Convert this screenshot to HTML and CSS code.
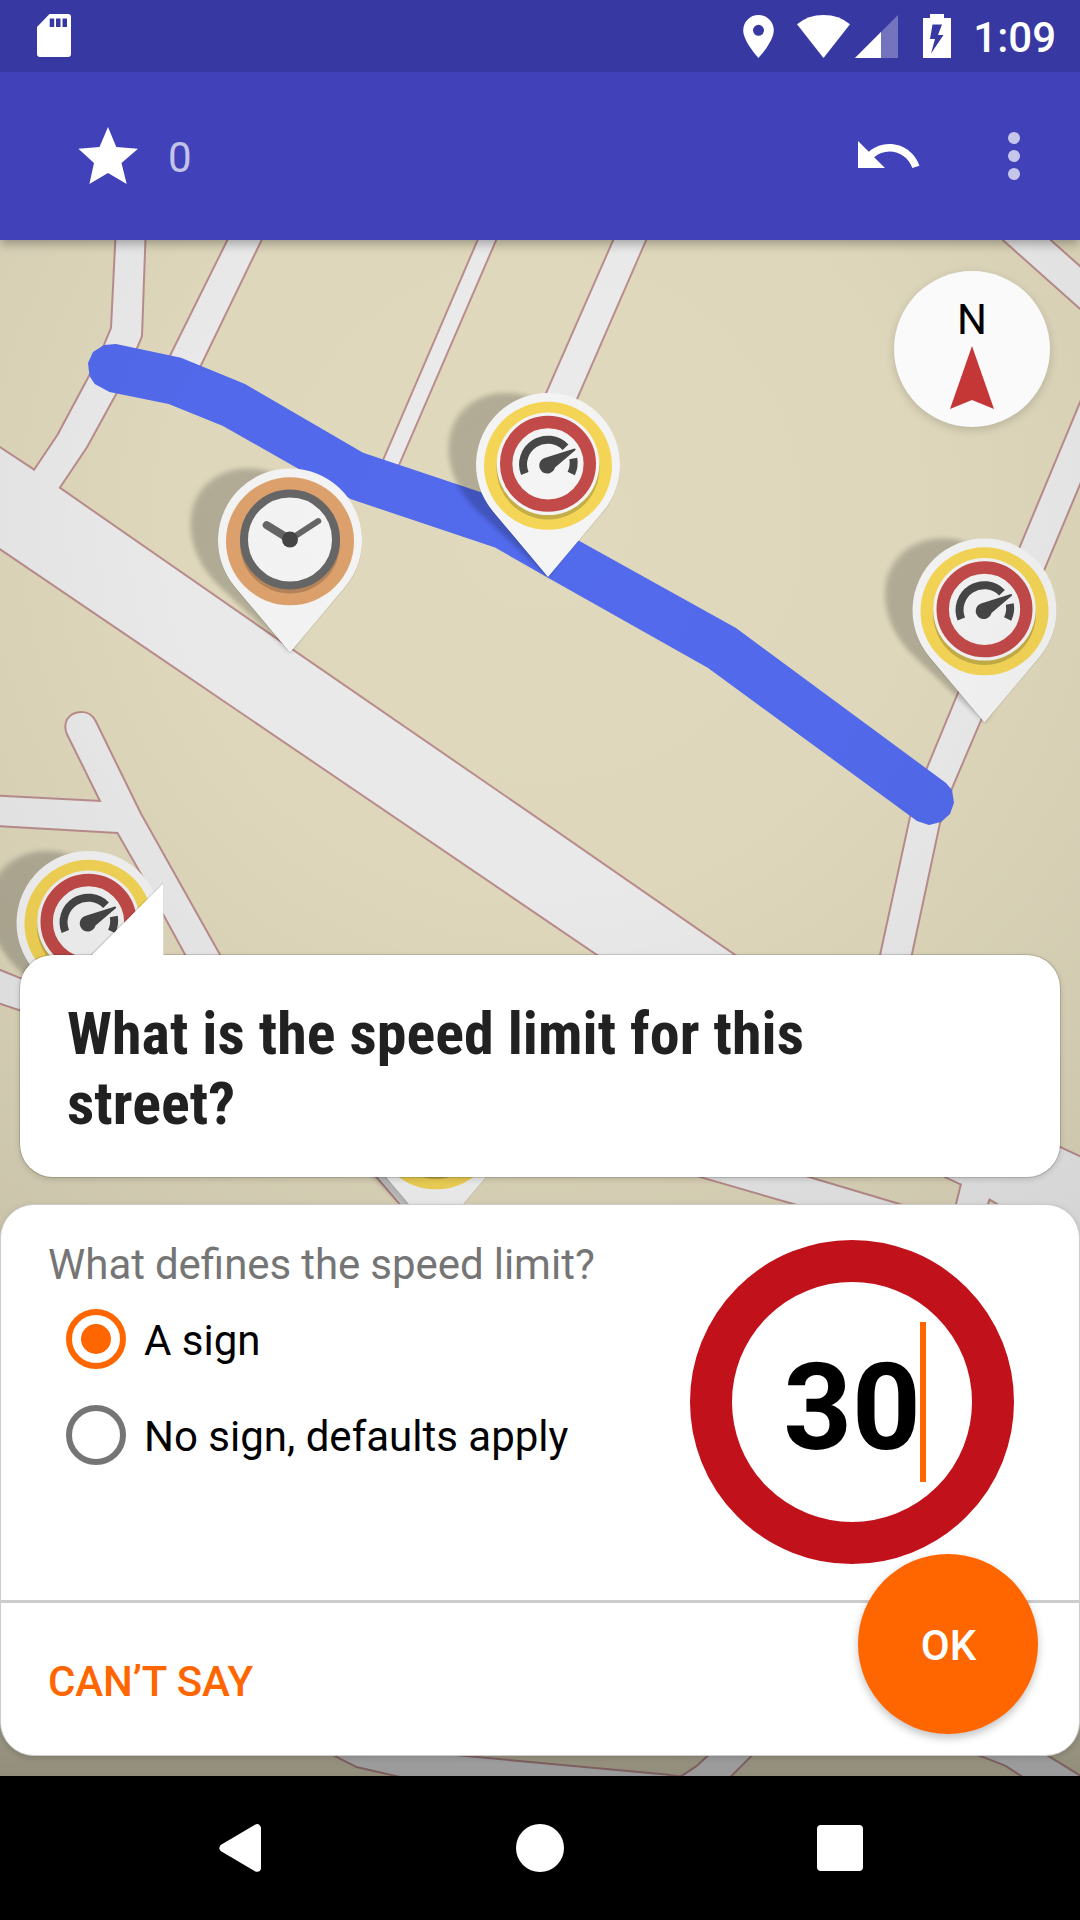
FILE: index.html
```html
<!DOCTYPE html>
<html lang="en">
<head>
<meta charset="utf-8">
<title>Speed limit quest</title>
<link rel="stylesheet" href="styles.css">
</head>
<body>
<div class="screen">
  <header class="status-bar">
    <svg class="icon-sd" width="34" height="44" viewBox="0 0 34 44"><path fill="#fff" fill-rule="evenodd" d="M12.500 0H31a3 3 0 0 1 3 3V40a3 3 0 0 1-3 3H3a3 3 0 0 1-3-3V13zM12.700 4.500v8.500h4.500V4.500zM19 4.500v8.500h4.500V4.500zM25.500 4.500v8.500h4.500V4.500z"/></svg>
    <div class="status-right">
      <svg width="31" height="43" viewBox="0 0 31 43"><path fill="#fff" fill-rule="evenodd" d="M15.500 0A15.300 15.300 0 0 0 .2 15.300C.2 26.500 15.500 43 15.500 43S30.800 26.500 30.800 15.300A15.300 15.300 0 0 0 15.500 0zM15.500 9.800a5.500 5.500 0 1 1 0 11 5.500 5.500 0 0 1 0-11z"/></svg>
      <svg class="icon-wifi" width="53" height="43" viewBox="0 0 53 43"><path fill="#fff" d="M0 9.300Q11 0 26.500 0T53 9.300L26.500 43z"/></svg>
      <svg class="icon-signal" width="43" height="43" viewBox="0 0 43 43"><path fill="#fff" opacity=".3" d="M43 0V43H0z"/><path fill="#fff" d="M26 17V43H0z"/></svg>
      <svg class="icon-battery" width="28" height="44" viewBox="0 0 28 44"><path fill="#fff" fill-rule="evenodd" d="M7 0H21V4H28V44H0V4H7zM9.500 10.500L7 25H12L8 39.500L20.500 21H15L19 10.500z"/></svg>
      <span class="clock">1:09</span>
    </div>
  </header>
  <div class="toolbar">
    <svg class="star" width="60" height="58" viewBox="0 0 60 58"><path fill="#fff" d="M30 0L38.300 20L60 21.700L43.500 36L48.700 57L30 46L11.400 57L16 36L.4 21.700L21.500 20z"/></svg>
    <span class="score">0</span>
    <svg class="undo" width="72" height="72" viewBox="0 0 24 24"><path fill="#fff" d="M12.500 8c-2.650 0-5.050.99-6.900 2.600L2 7v9h9l-3.620-3.620c1.390-1.160 3.160-1.880 5.120-1.880 3.540 0 6.550 2.310 7.600 5.500l2.370-.78C21.080 11.030 17.150 8 12.500 8z"/></svg>
    <svg class="more" width="12" height="48" viewBox="0 0 12 48"><g fill="#fff" opacity=".7"><circle cx="6" cy="6" r="6"/><circle cx="6" cy="24" r="6"/><circle cx="6" cy="42" r="6"/></g></svg>
  </div>
  <main class="content">
    <svg class="map" width="1080" height="1536" viewBox="0 240 1080 1536">
      <defs>
        <radialGradient id="light" gradientUnits="userSpaceOnUse" cx="540" cy="520" r="1250">
          <stop offset="0" stop-color="#000" stop-opacity="0"/>
          <stop offset=".3" stop-color="#000" stop-opacity=".01"/>
          <stop offset=".5" stop-color="#000" stop-opacity=".045"/>
          <stop offset="1" stop-color="#000" stop-opacity=".16"/>
        </radialGradient>
        <linearGradient id="foot" x1="0" y1="0" x2="0" y2="1">
          <stop offset="0" stop-opacity="0"/><stop offset=".5" stop-opacity=".19"/><stop offset="1" stop-opacity=".22"/>
        </linearGradient>
        <filter id="soft" x="-20%" y="-20%" width="140%" height="140%"><feGaussianBlur stdDeviation="2.500"/></filter>
        <path id="drop" d="M0 0L-55.200-65.800A72 72 0 1 1 55.200-65.800z"/>
        <g id="pin-base">
          <use href="#drop" transform="matrix(1 0 .228 1 0 0)" opacity=".2" filter="url(#soft)"/>
          <use href="#drop" y="1" opacity=".12"/>
          <use href="#drop" fill="#f4f4f4"/>
        </g>
        <g id="speed-pin">
          <use href="#pin-base"/>
          <circle cy="-111.200" r="64" fill="#f4d556"/>
          <circle cy="-109" r="51.500" fill="#c4ae47"/>
          <circle cy="-113.200" r="51.300" fill="#f4f4f4"/>
          <circle cy="-113.200" r="41.800" fill="none" stroke="#c24a49" stroke-width="12.400"/>
          <path fill="none" stroke="#464646" stroke-width="8" d="M-23.200-103.500A24.700 24.700 0 0 1 17.500-129.800M25.300-118.500A25 25 0 0 1 23.200-103.500"/>
          <path fill="#464646" d="M26.500-128.500Q28.500-128 27-126.500L7-109.500A8 8 0 1 1-3.500-119z"/>
        </g>
        <g id="clock-pin">
          <use href="#pin-base"/>
          <circle cy="-111.200" r="64" fill="#dda16d"/>
          <circle cy="-109" r="50" fill="#b4835a"/>
          <circle cy="-113" r="46" fill="#f4f4f4" stroke="#666" stroke-width="8"/>
          <path stroke="#666" stroke-width="8" stroke-linecap="round" d="M0-113L-23.300-127.400"/>
          <path stroke="#666" stroke-width="6" stroke-linecap="round" d="M0-113L28.300-131.400"/>
          <circle cy="-113" r="8" fill="#444"/>
        </g>
        <g id="roads">
          <path d="M116.400 238L112 328L105 345L89 378L58.500 435L34.400 471L-5 445V545L0 548L165 660L540 915L640 983L774 983L732 954L540 821L293 651L58.500 488L86 447L115 394L136 348L141 336L144.500 238z"/>
          <path d="M229.500 238L171 356L150 390L185 395L200 365L261.500 238z"/>
          <path d="M479.600 238L384.600 459L380 470L392 480L398 465L496 238z"/>
          <path d="M615.200 238L487 530L519 530L646 238z"/>
          <path d="M1002 238L1085 312V272L1047 238z"/>
          <path d="M1085 393L1020.800 547L959 693L928 768L911 817L875 983H905L911 954L939 823L951.500 787L980.500 719L1044 568L1085 470z"/>
          <path d="M70 738L101.600 802L-5 796.500V825L118 832L141 872L163.600 913L200 980H232L218.500 954L140 814L95 722C91 714 86 713 81.600 713C70 713 61 723 70 738z"/>
          <path d="M-5 969L20 979L60 990V1020L19 1009L-5 1001z"/>
          <path d="M378 1177.500L340 1140L430 1140L450 1240H432z"/>
          <path d="M706 1177.700L602 1147L703 1147L808 1177.700L896 1204L930 1214L830 1214L797 1204z"/>
          <path d="M947 1177L962 1184L950 1232H977L989 1198L1090 1260V1162L1060 1148L1000 1120z"/>
          <path d="M330 1752L337 1756L356.700 1766L398 1775.500L430 1783H720L666 1775.500L455 1756L400 1750z"/>
          <path d="M713 1752L709 1756L697 1767L684 1775.500L672 1783H724L730 1776L754 1752z"/>
          <path d="M972 1752L983 1756L1006 1765L1023 1776L1033 1783H1088L1079 1776L1040 1752z"/>
        </g>
      </defs>
      <rect y="240" width="1080" height="1536" fill="#e0d9bd"/>
      <use href="#roads" fill="none" stroke="#bb8e8e" stroke-width="4"/>
      <use href="#roads" fill="#ebebeb"/>
      <path fill="#526aec" d="M104 345L116 344L181 357.700L245 384L363 452.700L508.600 501.600L579 540.700L736 628L946 783L952 790L954 802.700L950 814L941 822L929 825L917 821L707.700 667.700L548 577.700L495 547.500L350.500 499L297 468L223 426L168.700 404L109.500 392L94.700 384L89.500 376L88 363L93 352z"/>
      <use href="#clock-pin" x="290" y="652.500"/>
      <use href="#speed-pin" x="548" y="577"/>
      <use href="#speed-pin" x="984.500" y="722.500"/>
      <use href="#speed-pin" x="88.500" y="1035"/>
      <use href="#speed-pin" x="436" y="1236.500"/>
      <rect y="240" width="1080" height="1536" fill="url(#light)"/>
      <rect y="1690" width="1080" height="86" fill="url(#foot)"/>
    </svg>
    <div class="compass">
      <span>N</span>
      <svg width="44" height="63" viewBox="0 0 44 63"><path fill="#c53636" d="M22 0L44 63L22 54L0 63z"/></svg>
    </div>
    <section class="question">
      <svg class="tail" width="73" height="76" viewBox="0 0 73 76"><path fill="none" stroke="#000" stroke-opacity=".15" stroke-width="1.500" d="M0 72L72.500 0V72"/><path fill="#fff" d="M0 73L72.500 0V76H0z"/></svg>
      <h1>What is the speed limit for this street?</h1>
    </section>
    <section class="answer">
      <div class="form">
        <div class="options">
          <h2>What defines the speed limit?</h2>
          <label class="option"><span class="radio checked"></span><span class="label">A sign</span></label>
          <label class="option"><span class="radio"></span><span class="label">No sign, defaults apply</span></label>
        </div>
        <div class="sign"><span class="value">30</span><span class="caret"></span></div>
      </div>
      <div class="actions">
        <button class="skip">CAN’T SAY</button>
        <button class="ok">OK</button>
      </div>
    </section>
  </main>
  <nav class="nav-bar">
    <svg width="42" height="48" viewBox="0 0 42 48"><path fill="#fff" stroke="#fff" stroke-width="8" stroke-linejoin="round" d="M4.500 24L38 4.300V43.700z"/></svg>
    <svg width="48" height="48" viewBox="0 0 48 48"><circle cx="24" cy="24" r="24" fill="#fff"/></svg>
    <svg width="46" height="46" viewBox="0 0 46 46"><rect width="46" height="46" rx="4" fill="#fff"/></svg>
  </nav>
</div>
</body>
</html>
```

FILE: styles.css
```css
* { box-sizing: border-box; }

body {
  margin: 0;
  font-family: Roboto, "Liberation Sans", sans-serif;
}

h1, h2 { margin: 0; }

svg { display: block; flex: none; }

button {
  border: 0;
  padding: 0;
  background: none;
  font: 500 42px/1.17 Roboto, sans-serif;
}

.screen {
  width: 1080px;
  height: 1920px;
  display: flex;
  flex-direction: column;
  overflow: hidden;
}

.status-bar {
  height: 72px;
  background: #3838a2;
  display: flex;
  justify-content: space-between;
  align-items: center;
  padding: 0 24px 0 37px;
}

.status-right {
  display: flex;
  align-items: center;
}

.icon-wifi { margin-left: 23px; }
.icon-signal { margin-left: 5px; }
.icon-battery { margin-left: 25px; }

.clock {
  margin-left: 22px;
  color: #fff;
  font-size: 42px;
  font-weight: 500;
  line-height: 50px;
  padding-top: 3px;
}

.toolbar {
  position: relative;
  z-index: 2;
  height: 168px;
  background: #4141b9;
  display: flex;
  align-items: center;
  padding: 0 60px 0 78px;
  box-shadow: 0 4px 10px rgba(0, 0, 0, .3);
  clip-path: inset(0 0 -20px 0);
}

.score {
  margin-left: 30px;
  color: rgba(255, 255, 255, .7);
  font-size: 42px;
  line-height: 50px;
  padding-top: 4px;
}

.undo { margin-left: auto; }
.more { margin-left: 84px; }

.content {
  position: relative;
  height: 1536px;
  padding-top: 715px;
}

.map {
  position: absolute;
  left: 0;
  top: 0;
}

.compass {
  position: absolute;
  left: 894px;
  top: 31px;
  width: 156px;
  height: 156px;
  border-radius: 50%;
  background: #fafafa;
  box-shadow: 0 3px 10px rgba(0, 0, 0, .16);
  display: flex;
  flex-direction: column;
  align-items: center;
  padding-top: 24px;
  font-size: 42px;
  line-height: 50px;
}

.compass svg { margin-top: 1px; }

.question {
  position: relative;
  width: 1040px;
  height: 222px;
  margin: 0 20px 27px;
  padding: 44px 200px 0 47px;
  background: #fff;
  border-radius: 33px;
  box-shadow: 0 0 0 1px rgba(0, 0, 0, .12), 0 2px 6px rgba(0, 0, 0, .16);
}

.tail {
  position: absolute;
  left: 71px;
  top: -72px;
}

.question h1 {
  color: #212121;
  font-family: "Roboto Condensed", Roboto, sans-serif;
  font-size: 60px;
  font-weight: 700;
  font-stretch: 75%;
  line-height: 70.300px;
  letter-spacing: .06px;
}

.answer {
  position: relative;
  height: 552px;
  background: #fff;
  border: 1px solid #ccc;
  border-radius: 34px;
  box-shadow: 0 2px 6px rgba(0, 0, 0, .15);
}

.form {
  height: 398px;
  border-bottom: 3px solid #ccc;
  display: flex;
  justify-content: space-between;
  padding: 35px 65px 0 47px;
}

.options h2 {
  color: #757575;
  font-size: 42px;
  font-weight: 400;
  line-height: 50px;
  word-spacing: -.5px;
  margin-bottom: 1px;
}

.option {
  display: flex;
  align-items: center;
  height: 96px;
  padding-left: 18px;
  gap: 18px;
  color: #000;
  font-size: 42px;
}

.label { padding-top: 2px; }

.radio {
  width: 60px;
  height: 60px;
  border: 6px solid #757575;
  border-radius: 50%;
  display: grid;
  place-items: center;
}

.radio.checked { border-color: #f60; }

.radio.checked::after {
  content: "";
  width: 30px;
  height: 30px;
  border-radius: 50%;
  background: #f60;
}

.sign {
  width: 324px;
  height: 324px;
  border: 42px solid #c1121c;
  border-radius: 50%;
  display: flex;
  align-items: center;
  justify-content: center;
}

.value {
  font-size: 120px;
  font-weight: 700;
  line-height: 140px;
  padding-top: 12px;
}

.caret {
  width: 6px;
  height: 160px;
  margin: 0 -5px 0 -1px;
  background: #f60;
}

.actions {
  height: 152px;
  padding: 54px 47px 0;
}

.skip {
  color: #f60;
  letter-spacing: -.08px;
}

.ok {
  position: absolute;
  left: 857px;
  top: 349px;
  width: 180px;
  height: 180px;
  padding: 3px 0 0 1px;
  border-radius: 50%;
  background: #f60;
  color: #fff;
  box-shadow: 0 4px 8px rgba(0, 0, 0, .24);
}

.nav-bar {
  height: 144px;
  background: #000;
  display: grid;
  grid-template-columns: 297px 1fr 46px;
  align-items: center;
  padding: 0 217px 0 219px;
}
```
